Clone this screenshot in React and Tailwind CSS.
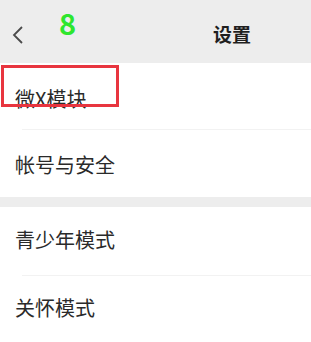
export default function App() {
  const font = { fontFamily: '"Noto Sans CJK SC", "Noto Sans", sans-serif' };

  return (
    <div className="w-[311px] h-[342px] overflow-hidden bg-white relative" style={font}>
      {/* Header */}
      <div className="h-[63px] bg-[#ededed] flex items-center relative">
        <svg className="ml-[11px] mt-[6px]" width="14" height="20" viewBox="0 0 14 20">
          <path d="M11 2 L3 10 L11 18" fill="none" stroke="#4a4a4a" strokeWidth="1.8" />
        </svg>
        <span className="absolute left-[59px] top-[5px] text-[29px] font-bold text-[#2ee62e] leading-none mt-[3px]">
          8
        </span>
        <span className="ml-[188px] mt-[6px] text-[19px] font-bold text-[#1f1f1f]">设置</span>
      </div>

      {/* Group 1 */}
      <div className="flex flex-col">
        <div className="h-[67px] flex items-center pl-[15px] pt-[4px] relative">
          <span className="text-[20px] text-[#2a2a2a]">微X模块</span>
          <div className="absolute left-[22px] right-0 bottom-0 h-px bg-[#f2f2f2]" />
        </div>
        <div className="h-[67px] flex items-center pl-[15px] pt-[2px]">
          <span className="text-[20px] text-[#2a2a2a]">帐号与安全</span>
        </div>
      </div>

      <div className="h-[10px] bg-[#ededed]" />

      {/* Group 2 */}
      <div className="flex flex-col">
        <div className="h-[69px] flex items-center pl-[15px] pb-[4px] relative">
          <span className="text-[20px] text-[#2a2a2a]">青少年模式</span>
          <div className="absolute left-[22px] right-0 bottom-0 h-px bg-[#f2f2f2]" />
        </div>
        <div className="h-[67px] flex items-center pl-[15px] pb-[4px]">
          <span className="text-[20px] text-[#2a2a2a]">关怀模式</span>
        </div>
      </div>

      {/* Red annotation box */}
      <div className="absolute left-[1px] top-[65px] w-[118px] h-[42px] border-[3px] border-[#e8353f]" />
    </div>
  );
}
